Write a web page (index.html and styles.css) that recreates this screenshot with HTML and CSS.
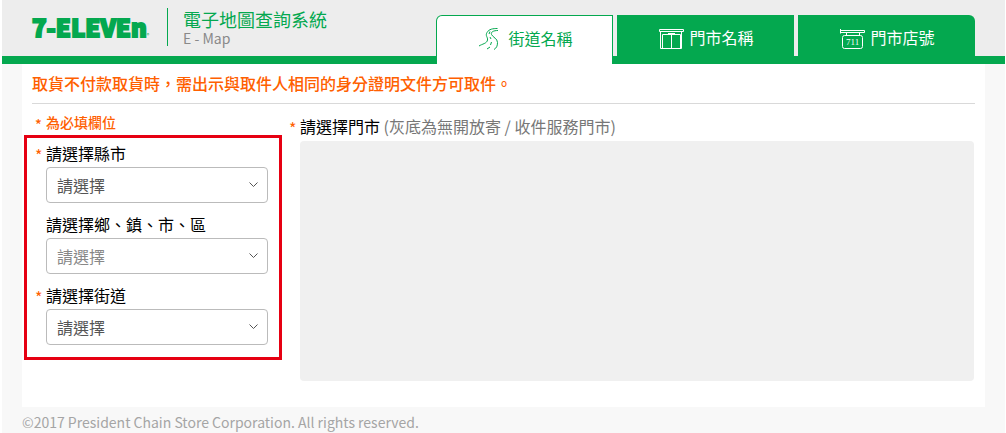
FILE: index.html
```html
<!DOCTYPE html>
<html lang="zh-Hant">
<head>
    <meta charset="UTF-8">
    <title>電子地圖查詢系統</title>
    <link rel="stylesheet" href="styles.css">
</head>
<body>
    <header class="header">
        <a class="logo" href="#">7-ELEVEn<span class="reg">®</span></a>
        <div class="system">
            <h1 class="system-name">電子地圖查詢系統</h1>
            <p class="system-sub">E - Map</p>
        </div>
        <nav class="tabs">
            <a class="tab active" href="#">
                <svg class="icon" viewBox="0 0 25 25">
                    <path d="M1 19C4 17 9 16.500 9.500 13C10 10 7 9 9 5.500C11 2 15 1.500 19.500 1.500"/>
                    <path d="M20 3.500C15.500 3.500 12.500 5 13.500 7.500C15 10.500 19.500 11.500 19.500 15.500C19.500 19 18.500 21 16 22.500"/>
                    <path d="M12 4.500L11 7M12 10L13 12M13.500 15L12.500 18M12 20L9 22"/>
                </svg>
                街道名稱
            </a>
            <a class="tab" href="#">
                <svg class="icon" viewBox="0 0 25 25">
                    <path d="M.500 2.500H24.500V4.500H.500ZM1.500 5V21.500H22.500V5M3.500 21V7.500H21.500V21M12.500 8V21M9 6.500H16"/>
                </svg>
                門市名稱
            </a>
            <a class="tab" href="#">
                <svg class="icon" viewBox="0 0 25 25">
                    <path d="M.500 2V6.500M.500 3.500H24.500V5.500H.500M6.500 5.500V8.500M19.500 5.500V8.500"/>
                    <rect x="2.500" y="8.500" width="20" height="13" rx="2"/>
                    <text class="icon-text" x="6" y="18">711</text>
                </svg>
                門市店號
            </a>
        </nav>
    </header>

    <main class="content">
        <p class="notice">取貨不付款取貨時，需出示與取件人相同的身分證明文件方可取件。</p>
        <div class="columns">
            <form class="search">
                <p class="hint"><span class="star">*</span>為必填欄位</p>
                <div class="field">
                    <label class="label" for="city"><span class="star">*</span>請選擇縣市</label>
                    <select class="select" id="city"><option>請選擇</option></select>
                </div>
                <div class="field">
                    <label class="label" for="town"><span class="star"></span>請選擇鄉、鎮、市、區</label>
                    <select class="select" id="town" disabled><option>請選擇</option></select>
                </div>
                <div class="field">
                    <label class="label" for="street"><span class="star">*</span>請選擇街道</label>
                    <select class="select" id="street"><option>請選擇</option></select>
                </div>
                <div class="mark"></div>
            </form>
            <section class="stores">
                <h2 class="label"><span class="star">*</span>請選擇門市&nbsp;<small class="note">(灰底為無開放寄 / 收件服務門市)</small></h2>
                <div class="store-list"></div>
            </section>
        </div>
    </main>

    <footer class="footer">©2017 President Chain Store Corporation. All rights reserved.</footer>
</body>
</html>
```
FILE: styles.css
```css
* {
    box-sizing: border-box;
}
html {
    background: #fff;
}
body {
    margin: 0 1px 0 2px;
    background: #f8f8f8;
    font-family: "Noto Sans CJK TC", sans-serif;
    font-size: 16px;
    line-height: 24px;
}
h1, h2, p {
    margin: 0;
}
a {
    text-decoration: none;
}

.header {
    display: flex;
    align-items: flex-start;
    height: 64px;
    padding: 0 30px;
    background: #ededed;
    border-bottom: 8px solid #04a84f;
}
.logo {
    width: 135px;
    padding-top: 10px;
    color: #04a84f;
    font-size: 24px;
    font-weight: 900;
    line-height: 34px;
    white-space: nowrap;
    -webkit-text-stroke: 2px #04a84f;
}
.reg {
    font-size: 5px;
    font-weight: normal;
    -webkit-text-stroke: 0;
}
.system {
    margin-top: 8px;
    padding-left: 15px;
    border-left: 1px solid #04a84f;
}
.system-name {
    color: #04a84f;
    font-size: 18px;
    font-weight: normal;
    line-height: 22px;
}
.system-sub {
    color: #898989;
    font-size: 14px;
    line-height: 16px;
}

.tabs {
    display: flex;
    gap: 4px;
    margin: 15px 0 0 auto;
}
.tab {
    display: flex;
    align-items: center;
    justify-content: center;
    gap: 5px;
    width: 177px;
    height: 49px;
    padding: 0 0 5px 2px;
    background: #04a84f;
    color: #fff;
}
.tab.active {
    background: #fff;
    border: 1px solid #04a84f;
    border-bottom: 0;
    border-radius: 6px 0 0 0;
    color: #04a84f;
}
.tab:last-child {
    border-radius: 0 6px 0 0;
}
.icon {
    width: 25px;
    height: 25px;
    margin-top: 4px;
    fill: none;
    stroke: currentColor;
}
.icon-text {
    fill: currentColor;
    stroke: none;
    font-family: "Liberation Serif", serif;
    font-size: 9px;
}

.content {
    margin: 0 20px;
    padding: 7px 10px 26px;
    background: #fff;
}
.notice {
    padding-bottom: 8px;
    border-bottom: 1px solid #d9d9d9;
    color: #ff6000;
    font-weight: 500;
}
.columns {
    display: flex;
    gap: 21px;
}
.search {
    position: relative;
    width: 236px;
    padding-top: 8px;
}
.hint {
    display: flex;
    padding-left: 3px;
    margin-bottom: 9px;
    color: #ff6000;
    font-size: 14px;
    font-weight: 500;
    line-height: 20px;
}
.field {
    padding-left: 3px;
    margin-bottom: 9px;
}
.label {
    display: flex;
    margin-bottom: 2px;
    color: #000;
    font-size: 16px;
    font-weight: normal;
}
.star {
    width: 11px;
    padding-top: 2px;
    color: #ff6000;
}
.select {
    display: block;
    width: 222px;
    height: 36px;
    margin-left: 11px;
    padding: 0 10px;
    appearance: none;
    background: #fff url("data:image/svg+xml,%3Csvg xmlns='http://www.w3.org/2000/svg' width='9' height='6' fill='none' stroke='%23555'%3E%3Cpath d='M.5 .5L4.500 4.500L8.500 .5'/%3E%3C/svg%3E") no-repeat right 9px center;
    border: 1px solid #bbb;
    border-radius: 4px;
    color: #555;
    font-family: inherit;
    font-size: 16px;
}
.select:disabled {
    color: #888;
    opacity: 1;
}
.mark {
    position: absolute;
    top: 31px;
    left: -8px;
    width: 258px;
    height: 225px;
    border: 3px solid #e60012;
    pointer-events: none;
}

.stores {
    flex: 1;
    padding-top: 10px;
}
.store-list {
    height: 240px;
    margin: 1px 1px 0 11px;
    background: #f0f0f0;
    border-radius: 4px;
}
.stores .label {
    margin-bottom: 0;
}
.field .label,
.hint {
    height: 24px;
}
.hint {
    margin-bottom: 5px;
}
.note {
    color: #777;
    font-size: 16px;
}

.footer {
    padding: 3px 20px 0;
    color: #a5a5a5;
    font-size: 14px;
}
```
